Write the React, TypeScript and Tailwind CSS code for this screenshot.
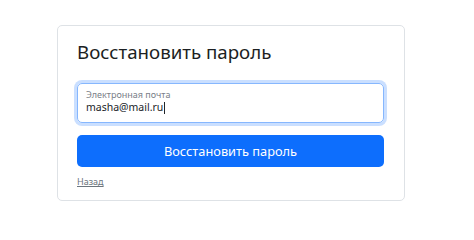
export default function App() {
  return (
    <div
      className="w-[474px] h-[229px] bg-white pt-[25px] pl-[57px]"
      style={{ fontFamily: '"Noto Sans", "Open Sans", sans-serif' }}
    >
      <div className="w-[348px] h-[176px] border border-[#dee2e6] rounded-[5px] px-[19px] pt-[15px]">
        <h1 className="text-[18.7px] leading-[22px] font-normal text-[#1c1f23]">
          Восстановить пароль
        </h1>

        <div className="mt-[20px] h-[40px] w-[307px] border border-[#86b7fe] rounded-[5px] shadow-[0_0_0_3px_rgba(13,110,253,0.22)] px-[8px] pt-[6px]">
          <div className="text-[9px] leading-[10px] text-[#7a8088]">Электронная почта</div>
          <div className="mt-[1px] text-[10.5px] leading-[13px] text-[#212529] flex items-center">
            masha@mail.ru
            <span className="inline-block w-px h-[12px] bg-[#212529] ml-px" />
          </div>
        </div>

        <button className="mt-[12px] h-[32px] w-[307px] bg-[#0d6efd] rounded-[5px] text-white text-[12.8px] leading-[32px]">
          Восстановить пароль
        </button>

        <div className="mt-[9px] text-[9px] leading-[12px]">
          <a className="text-[#6c757d] underline">Назад</a>
        </div>
      </div>
    </div>
  )
}
